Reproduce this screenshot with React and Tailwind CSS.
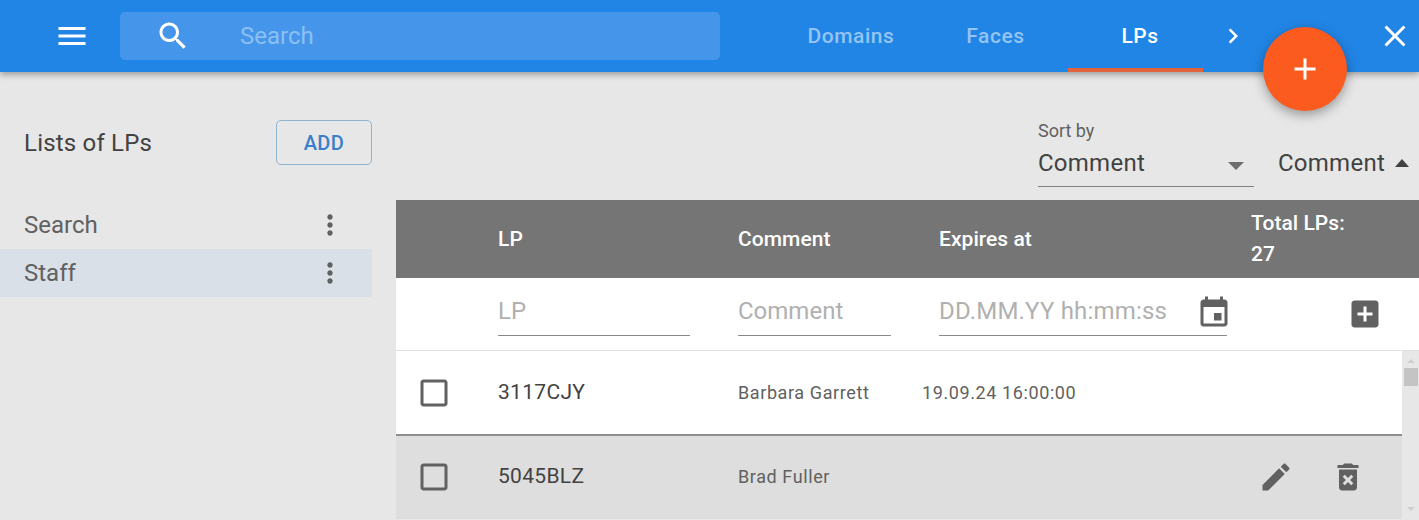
const Icon = ({ d, className = '' }) => (
  <svg viewBox="0 0 24 24" fill="currentColor" className={className}>
    <path d={d} />
  </svg>
);

const icons = {
  menu: 'M3 18h18v-2H3v2zm0-5h18v-2H3v2zm0-7v2h18V6H3z',
  search: 'M15.5 14h-.79l-.28-.27C15.41 12.59 16 11.11 16 9.5 16 5.91 13.09 3 9.5 3S3 5.91 3 9.5 5.91 16 9.5 16c1.61 0 3.09-.59 4.23-1.57l.27.28v.79l5 4.99L20.49 19l-4.99-5zm-6 0C7.01 14 5 11.99 5 9.5S7.01 5 9.5 5 14 7.01 14 9.5 11.99 14 9.5 14z',
  close: 'M19 6.41L17.59 5 12 10.59 6.41 5 5 6.41 10.59 12 5 17.59 6.41 19 12 13.41 17.59 19 19 17.59 13.41 12z',
  add: 'M19 13h-6v6h-2v-6H5v-2h6V5h2v6h6v2z',
  chevron: 'M10 6L8.59 7.41 13.17 12l-4.58 4.59L10 18l6-6z',
  more: 'M12 8c1.1 0 2-.9 2-2s-.9-2-2-2-2 .9-2 2 .9 2 2 2zm0 2c-1.1 0-2 .9-2 2s.9 2 2 2 2-.9 2-2-.9-2-2-2zm0 6c-1.1 0-2 .9-2 2s.9 2 2 2 2-.9 2-2-.9-2-2-2z',
  event: 'M17 12h-5v5h5v-5zM16 1v2H8V1H6v2H5c-1.11 0-1.99.9-1.99 2L3 19c0 1.1.89 2 2 2h14c1.1 0 2-.9 2-2V5c0-1.1-.9-2-2-2h-1V1h-2zm3 18H5V8h14v11z',
  addBox: 'M19 3H5c-1.11 0-2 .9-2 2v14c0 1.1.89 2 2 2h14c1.1 0 2-.9 2-2V5c0-1.1-.9-2-2-2zm-2 10h-4v4h-2v-4H7v-2h4V7h2v4h4v2z',
  edit: 'M3 17.25V21h3.75L17.81 9.94l-3.75-3.75L3 17.25zM20.71 7.04c.39-.39.39-1.02 0-1.41l-2.34-2.34c-.39-.39-1.02-.39-1.41 0l-1.83 1.83 3.75 3.75 1.83-1.83z',
  trash: 'M6 19c0 1.1.9 2 2 2h8c1.1 0 2-.9 2-2V7H6v12zm2.46-7.12l1.41-1.41L12 12.59l2.12-2.12 1.41 1.41L13.41 14l2.12 2.12-1.41 1.41L12 15.41l-2.12 2.12-1.41-1.41L10.59 14l-2.13-2.12zM15.5 4l-1-1h-5l-1 1H5v2h14V4z',
  checkbox: 'M19 5v14H5V5h14m0-2H5c-1.1 0-2 .9-2 2v14c0 1.1.9 2 2 2h14c1.1 0 2-.9 2-2V5c0-1.1-.9-2-2-2z',
};

function Header() {
  return (
    <header className="relative z-10 flex h-[72px] items-center bg-[#2185e5] shadow-[0_3px_6px_rgba(0,0,0,0.3)]">
      <div className="w-[120px] pl-[54px]">
        <Icon d={icons.menu} className="h-[36px] w-[36px] text-white" />
      </div>
      <div className="flex h-[48px] w-[600px] items-center rounded-[5px] bg-[#4596ea] pl-[35px]">
        <Icon d={icons.search} className="h-[36px] w-[36px] text-white" />
        <span className="ml-[49px] text-[24px] text-[#8cc0f3]">Search</span>
      </div>
      <nav className="ml-[59px] flex h-full items-center gap-[9.5px] text-[21px] font-medium tracking-[0.55px]">
        <div className="flex h-full w-[135px] items-center justify-center pl-[9px] pt-[2px] text-[#94c4f4]">Domains</div>
        <div className="flex h-full w-[135px] items-center justify-center pl-[9px] pt-[2px] text-[#94c4f4]">Faces</div>
        <div className="flex h-full w-[135px] items-center justify-center border-b-[4px] border-[#e2643a] pl-[9px] pt-[6px] text-white">LPs</div>
      </nav>
      <Icon d={icons.chevron} className="ml-[15px] h-[30px] w-[30px] text-white" />
      <Icon d={icons.close} className="absolute left-[1377px] top-[18px] h-[36px] w-[36px] text-white" />
      <div className="absolute left-[1263px] top-[27px] flex h-[84px] w-[84px] items-center justify-center rounded-full bg-[#fb5b1f] shadow-[0_4px_12px_rgba(0,0,0,0.35)]">
        <Icon d={icons.add} className="h-[36px] w-[36px] text-white" />
      </div>
    </header>
  );
}

function Sidebar() {
  return (
    <aside className="w-[372px] shrink-0 pt-[48px]">
      <div className="flex h-[45px] items-center justify-between pl-[24px]">
        <span className="text-[24px] tracking-[0.2px] text-[#424242]">Lists of LPs</span>
        <button className="h-[45px] w-[96px] rounded-[5px] border border-[#8fb3d3] text-[20px] font-medium tracking-[0.4px] text-[#3a7fc9]">ADD</button>
      </div>
      <div className="mt-[36px]">
        {[['Search', ''], ['Staff', 'bg-[#d9e0e7]']].map(([name, bg]) => (
          <div key={name} className={`flex h-[48px] items-center justify-between pl-[24px] pr-[26px] text-[24px] text-[#616161] ${bg}`}>
            {name}
            <Icon d={icons.more} className="h-[32px] w-[32px] text-[#616161]" />
          </div>
        ))}
      </div>
    </aside>
  );
}

function SortBar() {
  return (
    <div className="flex h-[128px] items-start pl-[642px]">
      <div className="w-[216px] pt-[48px]">
        <div className="text-[18px] leading-[22px] text-[#616161]">Sort by</div>
        <div className="relative flex h-[45px] items-center border-b border-[#808080] pb-[2px] text-[24px] tracking-[0.25px] text-[#424242]">
          Comment
          <span className="absolute left-[190px] top-[20px] h-0 w-0 border-x-[8px] border-t-[8px] border-x-transparent border-t-[#6e6e6e]" />
        </div>
      </div>
      <div className="ml-[24px] flex items-center pt-[73px] text-[24px] leading-[36px] tracking-[0.25px] text-[#424242]">
        Comment
        <span className="ml-[10px] h-0 w-0 border-x-[7.5px] border-b-[8px] border-x-transparent border-b-[#424242]" />
      </div>
    </div>
  );
}

function TableHead() {
  return (
    <div className="flex h-[78px] items-center bg-[#757575] text-[21px] font-medium tracking-[0.05px] text-white">
      <div className="w-[102px]" />
      <div className="w-[240px] pt-[2px]">LP</div>
      <div className="w-[201px] pt-[2px]">Comment</div>
      <div className="w-[312px] pt-[2px]">Expires at</div>
      <div className="text-[21px] leading-[31px]">Total LPs:<br />27</div>
    </div>
  );
}

function FilterRow() {
  const field = 'border-b border-[#8a8a8a] pb-[6px] text-[24px] leading-[36px] text-[#b0b0b0]';
  return (
    <div className="flex h-[73px] items-center border-b border-[#e0e0e0] bg-white">
      <div className="w-[102px]" />
      <div className="w-[240px]">
        <div className={`w-[192px] ${field}`}>LP</div>
      </div>
      <div className="w-[201px]">
        <div className={`w-[153px] ${field}`}>Comment</div>
      </div>
      <div className="w-[288px]">
        <div className={`flex w-[288px] items-center justify-between tracking-[0.2px] ${field}`}>
          DD.MM.YY hh:mm:ss
          <Icon d={icons.event} className="mr-[-5px] translate-y-[2px] h-[36px] w-[36px] text-[#616161]" />
        </div>
      </div>
      <Icon d={icons.addBox} className="ml-[120px] h-[36px] w-[36px] text-[#616161]" />
    </div>
  );
}

function Row({ lp, comment, date, active }) {
  return (
    <div className={`flex items-center ${active ? 'h-[83px] bg-[#dedede] pb-[2px]' : 'h-[85px] border-b-2 border-[#8f8f8f] bg-white'}`}>
      <Icon d={icons.checkbox} className="ml-[20px] h-[36px] w-[36px] text-[#616161]" />
      <div className="ml-[46px] w-[240px] text-[21px] tracking-[0.3px] text-[#424242]">{lp}</div>
      <div className="w-[184px] text-[18px] tracking-[0.6px] text-[#616161]">{comment}</div>
      <div className="flex-1 text-[18px] tracking-[0.6px] text-[#616161]">{date}</div>
      {active && (
        <div className="flex items-center">
          <Icon d={icons.edit} className="h-[36px] w-[36px] text-[#616161]" />
          <Icon d={icons.trash} className="ml-[36px] mr-[36px] h-[36px] w-[36px] text-[#616161]" />
        </div>
      )}
    </div>
  );
}

function Scrollbar() {
  return (
    <div className="flex w-[17px] shrink-0 flex-col items-center bg-[#e7e7e7] pt-[8px]">
      <span className="h-0 w-0 border-x-[4px] border-b-[4px] border-x-transparent border-b-[#cfcfcf]" />
      <div className="mt-[5px] h-[18px] w-[14px] bg-[#c4c4c4]" />
      <span className="mt-auto mb-[8px] h-0 w-0 border-x-[4px] border-t-[4px] border-x-transparent border-t-[#cfcfcf]" />
    </div>
  );
}

export default function App() {
  return (
    <div className="h-[520px] w-[1419px] overflow-hidden bg-[#e7e7e7] font-['Roboto',sans-serif]">
      <Header />
      <div className="flex">
        <Sidebar />
        <main className="ml-[24px] flex-1">
          <SortBar />
          <TableHead />
          <FilterRow />
          <div className="flex h-[168px]">
            <div className="flex-1">
              <Row lp="3117CJY" comment="Barbara Garrett" date="19.09.24 16:00:00" />
              <Row lp="5045BLZ" comment="Brad Fuller" active />
            </div>
            <Scrollbar />
          </div>
        </main>
      </div>
    </div>
  );
}
